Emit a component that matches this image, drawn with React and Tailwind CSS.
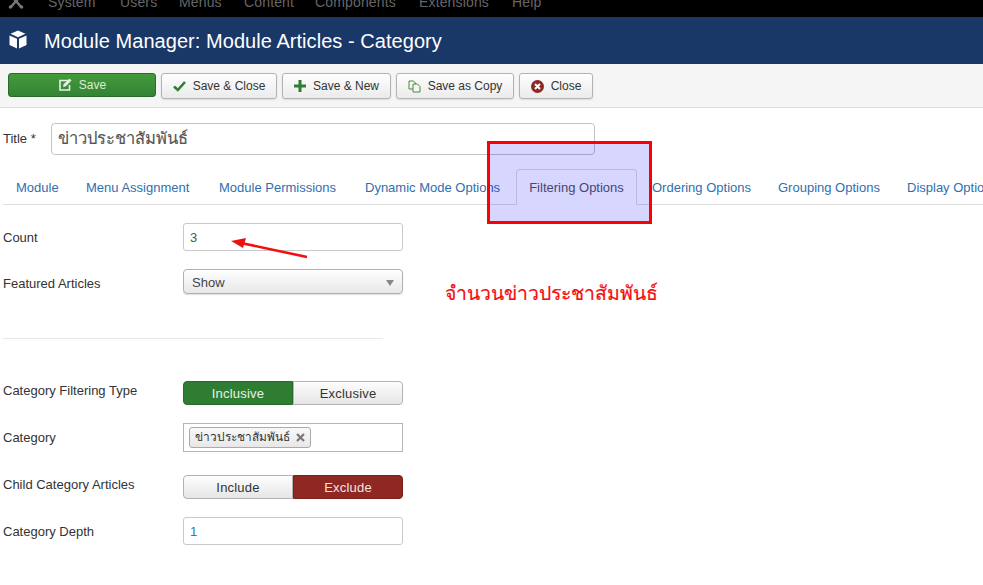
import React from 'react';

const font = { fontFamily: '"Liberation Sans", "Noto Sans", Arial, sans-serif' };
const thai = { fontFamily: '"Liberation Serif", "Noto Sans CJK SC", serif' };

const menu = [
    ['System', 48], ['Users', 120], ['Menus', 179], ['Content', 244], ['Components', 315], ['Extensions', 419], ['Help', 512],
];
const tabs = [
    ['Module', 70], ['Menu Assignment', 133], ['Module Permissions', 146], ['Dynamic Mode Options', 151],
    ['Filtering Options', 136], ['Ordering Options', 126], ['Grouping Options', 129], ['Display Options', 120],
];

function ToolButton({ icon, label, className = '' }) {
    return (
        <button className={`h-[26px] flex items-center justify-center gap-[7px] whitespace-nowrap rounded-[3px] border border-[#b3b3b3] bg-linear-to-b from-[#fefefe] to-[#ebebeb] text-[12px] text-[#333] shadow-[0_1px_2px_rgba(0,0,0,0.1)] ${className}`}>
            {icon}
            <span>{label}</span>
        </button>
    );
}

function Row({ label, labelClass = '', className = '', children }) {
    return (
        <div className={`flex items-center ${className}`}>
            <div className={`w-[180px] shrink-0 text-[13px] leading-[18px] text-[#333] ${labelClass}`}>{label}</div>
            {children}
        </div>
    );
}

function Toggle({ left, right, active }) {
    const off = 'bg-linear-to-b from-[#fdfdfd] to-[#e6e6e6] text-[#333] border border-[#b3b3b3]';
    const on = active === 'left' ? 'bg-[#2f7d32] text-[#e8f2e8] border border-[#2a6b2d]' : 'bg-[#8f2723] text-[#f3e4e3] border border-[#7a1f1c]';
    return (
        <div className="flex w-[220px] h-[24px] text-[13px] tracking-[0.2px]">
            <div className={`w-[110px] flex items-center justify-center pt-[1px] rounded-l-[4px] ${active === 'left' ? on : off}`}>{left}</div>
            <div className={`w-[110px] flex items-center justify-center pt-[1px] rounded-r-[4px] ${active === 'right' ? on : off}`}>{right}</div>
        </div>
    );
}

export default function App() {
    return (
        <div className="relative w-[983px] h-[585px] overflow-hidden bg-white" style={font}>

            {/* Top menu */}
            <div className="h-[17px] bg-black relative overflow-hidden text-[14px] tracking-[0.15px] text-[#666]">
                <svg className="absolute left-[8px] top-[-6px]" width="16" height="16" viewBox="0 0 16 16" fill="none" stroke="#777" strokeWidth="2.4">
                    <path d="M3 2 C6 5 10 9 13 13 M13 2 C10 5 6 9 3 13" />
                    <circle cx="2.5" cy="13" r="1.8" fill="#777" stroke="none" />
                    <circle cx="13.5" cy="13" r="1.8" fill="#777" stroke="none" />
                </svg>
                {menu.map(([name, x]) => (
                    <span key={name} className="absolute top-[-8px] leading-[20px]" style={{ left: x }}>{name}</span>
                ))}
            </div>

            {/* Title bar */}
            <div className="h-[47px] bg-[#1a3867] flex items-center pl-[9px] text-white">
                <svg width="18" height="19" viewBox="0 0 18 19" fill="white" className="mr-[17px] mt-[-2px]">
                    <path d="M9 0.5 L16.5 3.8 L9 7.2 L1.5 3.8 Z" />
                    <path d="M0.5 5.5 L8 8.8 L8 18.5 L0.5 15 Z" />
                    <path d="M17.5 5.5 L10 8.8 L10 18.5 L17.5 15 Z" />
                </svg>
                <h1 className="text-[20px] leading-[24px] mt-[1px] tracking-[0.05px]">Module Manager: Module Articles - Category</h1>
            </div>

            {/* Toolbar */}
            <div className="h-[44px] bg-[#f5f5f5] border-b border-[#dcdcdc] flex items-start pt-[9px] pl-[8px] gap-[5px]">
                <button className="w-[148px] h-[24px] flex items-center justify-center gap-[7px] rounded-[3px] border border-[#2a6b2d] bg-linear-to-b from-[#459a3c] to-[#338433] text-[12px] text-[#dcecd9]">
                    <svg width="14" height="14" viewBox="0 0 14 14" fill="none" stroke="#e6f1e4" strokeWidth="1.6">
                        <path d="M10 2.5 H2 V12 H11.5 V7" />
                        <path d="M5.5 8.5 L6 6.3 L11.5 1 L13 2.5 L7.7 8 Z" fill="#e6f1e4" strokeWidth="0.8" />
                    </svg>
                    <span>Save</span>
                </button>
                <ToolButton className="w-[116px]" label="Save & Close" icon={
                    <svg width="13" height="12" viewBox="0 0 13 12" fill="none" stroke="#2f7d32" strokeWidth="2.6"><path d="M1 6.5 L4.8 10 L12 2" /></svg>
                } />
                <ToolButton className="w-[109px]" label="Save & New" icon={
                    <svg width="12" height="12" viewBox="0 0 12 12" fill="#2f7d32"><path d="M4.5 0 H7.5 V4.5 H12 V7.5 H7.5 V12 H4.5 V7.5 H0 V4.5 H4.5 Z" /></svg>
                } />
                <ToolButton className="w-[118px]" label="Save as Copy" icon={
                    <svg width="13" height="13" viewBox="0 0 13 13" fill="none" stroke="#4a8a3c" strokeWidth="1"><path d="M1 1 H5.5 L7.5 3 V9 H1 Z" /><path d="M5 4 H9.5 L12 6.5 V12 H5 Z" fill="#f4f4f4" /></svg>
                } />
                <ToolButton className="w-[74px]" label="Close" icon={
                    <svg width="13" height="13" viewBox="0 0 13 13"><circle cx="6.5" cy="6.5" r="6.5" fill="#8f2723" /><path d="M4 4 L9 9 M9 4 L4 9" stroke="white" strokeWidth="2" /></svg>
                } />
            </div>

            {/* Title field */}
            <div className="flex items-center pl-[3px] mt-[15px] h-[32px]">
                <span className="w-[48px] text-[13px] text-[#333]">Title *</span>
                <div className="w-[544px] h-[32px] border border-[#c4c4c4] rounded-[4px] flex items-center pl-[6px] text-[16.5px] text-[#555] [-webkit-text-stroke:0.15px]" style={thai}>ข่าวประชาสัมพันธ์</div>
            </div>

            {/* Tabs */}
            <div className="mt-[14px] ml-[3px] pl-[13px] h-[36px] border-b border-[#ddd] flex whitespace-nowrap text-[13px] text-[#2f6fb0]">
                {tabs.map(([t, w], i) => (
                    i === 4
                        ? <div key={t} className="shrink-0" style={{ width: w }}>
                            <div className="w-[121px] h-[36px] pt-[8px] text-center border border-[#ddd] border-b-white rounded-t-[4px] bg-white text-[#555]">{t}</div>
                          </div>
                        : <div key={t} className="pt-[9px] shrink-0" style={{ width: w }}>{t}</div>
                ))}
            </div>

            {/* Form */}
            <div className="pl-[3px]">
                <Row label="Count" labelClass="mt-[1px]" className="mt-[18px]">
                    <div className="w-[220px] h-[28px] border border-[#c9c9c9] rounded-[3px] flex items-center pl-[6px] pt-[1px] text-[13px] text-[#555]">3</div>
                </Row>
                <Row label="Featured Articles" labelClass="mt-[5px]" className="mt-[18px]">
                    <div className="w-[220px] h-[25px] border border-[#b0b0b0] rounded-[4px] bg-linear-to-b from-white to-[#e8e8e8] flex items-center justify-between pl-[8px] pr-[8px] pt-[2px] text-[13px] text-[#444] shadow-[0_1px_1px_rgba(0,0,0,0.12)]">
                        <span>Show</span>
                        <span className="w-0 h-0 border-x-[4px] border-x-transparent border-t-[6px] border-t-[#888]"></span>
                    </div>
                </Row>
                <div className="w-[380px] h-px bg-[#e8e8e8] mt-[44px]"></div>
                <Row label="Category Filtering Type" labelClass="mt-[-5px]" className="mt-[42px]">
                    <Toggle left="Inclusive" right="Exclusive" active="left" />
                </Row>
                <Row label="Category" className="mt-[18px]">
                    <div className="w-[220px] h-[29px] border border-[#b5b5b5] flex items-center pl-[5px]">
                        <div className="h-[21px] flex items-center gap-[6px] px-[5px] border border-[#aaa] rounded-[3px] bg-linear-to-b from-[#f8f8f8] to-[#e8e8e8] text-[11.9px] text-[#333]" style={thai}>
                            <span>ข่าวประชาสัมพันธ์</span>
                            <svg width="9" height="9" viewBox="0 0 9 9" stroke="#777" strokeWidth="2.2"><path d="M1 1 L8 8 M8 1 L1 8" /></svg>
                        </div>
                    </div>
                </Row>
                <Row label="Child Category Articles" labelClass="mt-[-5px]" className="mt-[23px]">
                    <Toggle left="Include" right="Exclude" active="right" />
                </Row>
                <Row label="Category Depth" labelClass="mt-[1px]" className="mt-[18px]">
                    <div className="w-[220px] h-[28px] border border-[#c9c9c9] rounded-[3px] flex items-center pl-[6px] pt-[1px] text-[13px] text-[#3a74b0]">1</div>
                </Row>
            </div>

            {/* Annotations drawn over the screenshot */}
            <div className="absolute left-[487px] top-[141px] w-[165px] h-[83px] border-[3px] border-[#fe0000] bg-[#0000ff]/[0.16] pointer-events-none"></div>
            <svg className="absolute left-[225px] top-[232px] pointer-events-none" width="90" height="30" viewBox="0 0 90 30">
                <path d="M82 25 L16 11" stroke="#f01010" strokeWidth="2.6" />
                <path d="M6 9 L21 6 L18 16 Z" fill="#f01010" />
            </svg>
            <div className="absolute left-[445px] top-[280px] text-[19.4px] leading-[28px] text-[#f60d0d] whitespace-nowrap [-webkit-text-stroke:0.2px]" style={thai}>จำนวนข่าวประชาสัมพันธ์</div>
        </div>
    );
}
